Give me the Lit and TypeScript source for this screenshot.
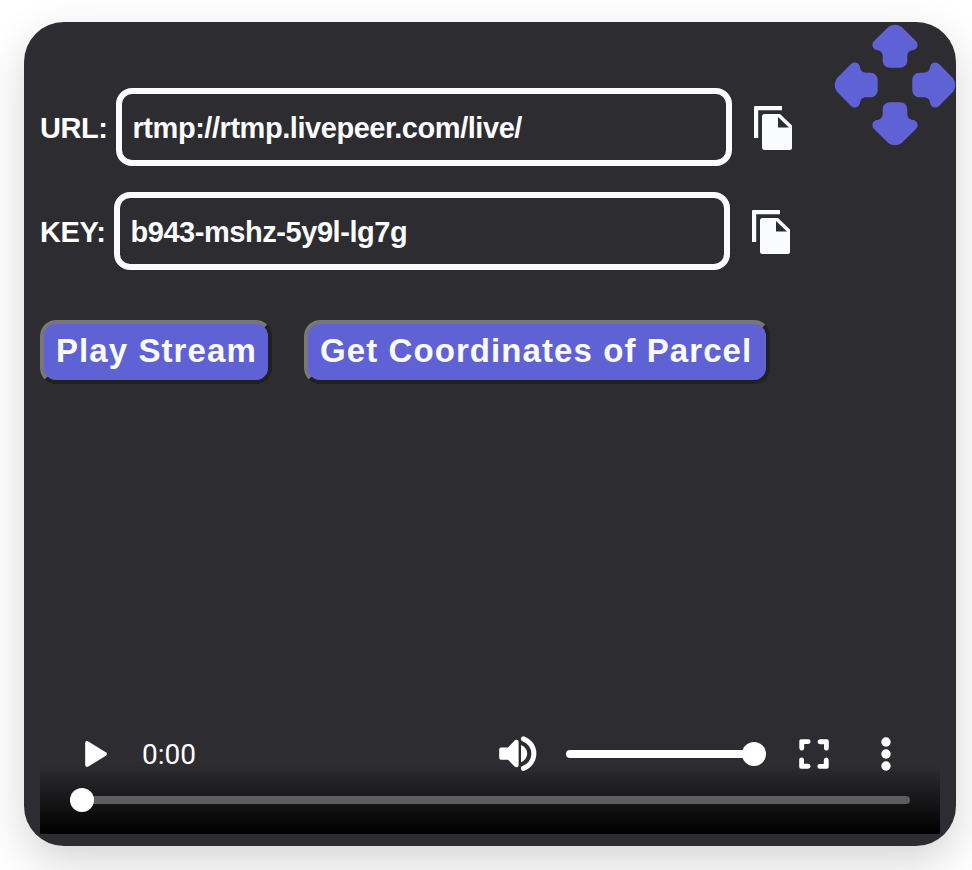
import { LitElement, html, svg, css } from "lit";
import { customElement, property } from "lit/decorators.js";

@customElement("copy-field")
class CopyField extends LitElement {
  @property() label = "";
  @property() value = "";

  static styles = css`
    :host { display: flex; align-items: center; height: 78px; color: #fff; font: bold 29px "Liberation Sans", Arial, sans-serif; letter-spacing: -.45px; }
    .label { width: var(--label-width, 76px); padding-top: 2px; box-sizing: border-box; white-space: nowrap; }
    .box { box-sizing: border-box; width: 616px; height: 78px; border: 6px solid #fafbfe; border-radius: 16px; padding: 2px 10px 0 10.5px; display: flex; align-items: center; color: #fafbfe; white-space: nowrap; }
    .copy { display: block; margin-left: 22px; width: 38px; height: 44px; margin-top: 2px; fill: #fafbfe; }
  `;

  render() {
    return html`
      <span class="label">${this.label}</span>
      <div class="box">${this.value}</div>
      <svg class="copy" viewBox="0 0 38 44">
        <path d="M1 0H28V4.2H4.2V32H0V1Q0 0 1 0Z" />
        <path fill-rule="evenodd" d="M10.5 8H26L38 19.5V42Q38 44 36 44H10.5Q8 44 8 41.5V10.5Q8 8 10.5 8ZM24 11V21.6H35Z" />
      </svg>
    `;
  }
}

@customElement("video-controls")
class VideoControls extends LitElement {
  static styles = css`
    :host { display: flex; flex-direction: column; box-sizing: border-box; width: 900px; height: 110px; color: #fff; background: linear-gradient(rgba(0,0,0,.03), #000) 0 100% / 100% 67px no-repeat; }
    svg { display: block; fill: #fff; }
    .row { display: flex; align-items: center; height: 60px; padding: 0 49px 0 45px; }
    .time { margin-left: 35px; width: 357px; font: 28px Roboto, sans-serif; }
    .volume { display: flex; align-items: center; width: 200px; margin-left: 29px; }
    .level { width: 188px; height: 8px; border-radius: 4px; background: #fff; }
    .knob { width: 24px; height: 24px; border-radius: 50%; background: #fff; flex: none; }
    .level + .knob { margin-left: -12px; }
    .full { margin-left: 33px; }
    .more { margin-left: 52px; }
    .timeline { display: flex; align-items: center; width: 840px; height: 24px; margin: 4px 0 0 30px; }
    .rail { width: 840px; height: 8px; border-radius: 4px; background: #5d5d5e; margin-left: -24px; flex: 1; }
    .timeline .knob { z-index: 1; }
  `;

  render() {
    return html`
      <div class="row">
        <svg width="22" height="26" viewBox="0 0 22 26"><path d="M3.3.4 20.8 11.2Q23 13 20.8 14.8L3.3 25.6Q.2 26.8.2 23.8V2.2Q.2-.8 3.3.4Z" /></svg>
        <span class="time">0:00</span>
        <svg width="38" height="36" viewBox="0 0 38 36">
          <path d="M2 11.4H9L15.6 4.6Q17 3.3 18.6 4Q19.6 4.5 19.6 6V29Q19.6 30.6 18.6 31.1Q17 31.7 15.6 30.5L9 23.8H2Q.2 23.8.2 22V13.2Q.2 11.4 2 11.4Z" />
          <path d="M22 9Q28.2 11.8 28.2 17.5T22 26.2Z" />
          <path d="M24.4 2.8A15.7 15.7 0 0 1 24.4 32.4" fill="none" stroke="#fff" stroke-width="5" stroke-linecap="round" />
        </svg>
        <div class="volume"><div class="level"></div><div class="knob"></div></div>
        <svg class="full" width="30" height="30" viewBox="0 0 30 30">
          ${[0, 90, 180, 270].map((a) => svg`<path transform="rotate(${a} 15 15)" d="M2 .2H9.2Q11.6.2 11.6 2.6T9.2 5H5.2V9Q5.2 11.5 2.8 11.5T.3 9V2Q.3.2 2 .2Z" />`)}
        </svg>
        <svg class="more" width="10" height="34" viewBox="0 0 10 34">
          ${[5, 17, 29].map((y) => svg`<circle cx="5" cy=${y} r="4.7" />`)}
        </svg>
      </div>
      <div class="timeline"><div class="knob"></div><div class="rail"></div></div>
    `;
  }
}

@customElement("app-root")
class AppRoot extends LitElement {
  static styles = css`
    :host { display: block; box-sizing: border-box; width: 972px; height: 870px; padding: 22px 16px 24px 24px; background: #fff; overflow: hidden; }
    .card { position: relative; box-sizing: border-box; width: 932px; height: 824px; padding: 66px 16px 12px; border-radius: 40px; background: #2d2c30; box-shadow: 0 16px 44px rgba(0,0,0,.17); display: flex; flex-direction: column; }
    .move { position: absolute; right: 0; top: 2px; fill: #5f62d5; }
    .fields { display: flex; flex-direction: column; gap: 26px; }
    .key { --label-width: 74px; }
    .actions { display: flex; gap: 32px; margin-top: 50px; }
    .button { box-sizing: border-box; width: 232px; height: 64px; padding: 0 0 2px 12px; border: 4px solid; border-color: #777 #212122 #212122 #777; border-radius: 16px; background: #5f62d5; color: #fafbfe; font: bold 33px/52px "Liberation Sans", Arial, sans-serif; letter-spacing: 1.08px; text-align: left; white-space: nowrap; }
    .wide { width: 466px; }
    .player { margin-top: auto; }
  `;

  render() {
    return html`
      <main class="card">
        <svg class="move" width="122" height="122" viewBox="-61 -61 122 122">
          ${[0, 90, 180, 270].map((a) => svg`<path transform="rotate(${a})" d="M-6.5-58.3Q0-62.3 6.5-58.3L20.7-44.3C23.8-41.3 23.2-36.5 18.5-35.1C15-34.8 12.3-33 12.3-28.5V-25C12.3-20 9-17.3 5-17.3H-5C-9-17.3-12.3-20-12.3-25V-28.5C-12.3-33-15-34.8-18.5-35.1C-23.2-36.5-23.8-41.3-20.7-44.3Z" />`)}
        </svg>
        <div class="fields">
          <copy-field label="URL:" value="rtmp://rtmp.livepeer.com/live/"></copy-field>
          <copy-field class="key" label="KEY:" value="b943-mshz-5y9l-lg7g"></copy-field>
        </div>
        <div class="actions">
          <button class="button">Play Stream</button>
          <button class="button wide">Get Coordinates of Parcel</button>
        </div>
        <video-controls class="player"></video-controls>
      </main>
    `;
  }
}
